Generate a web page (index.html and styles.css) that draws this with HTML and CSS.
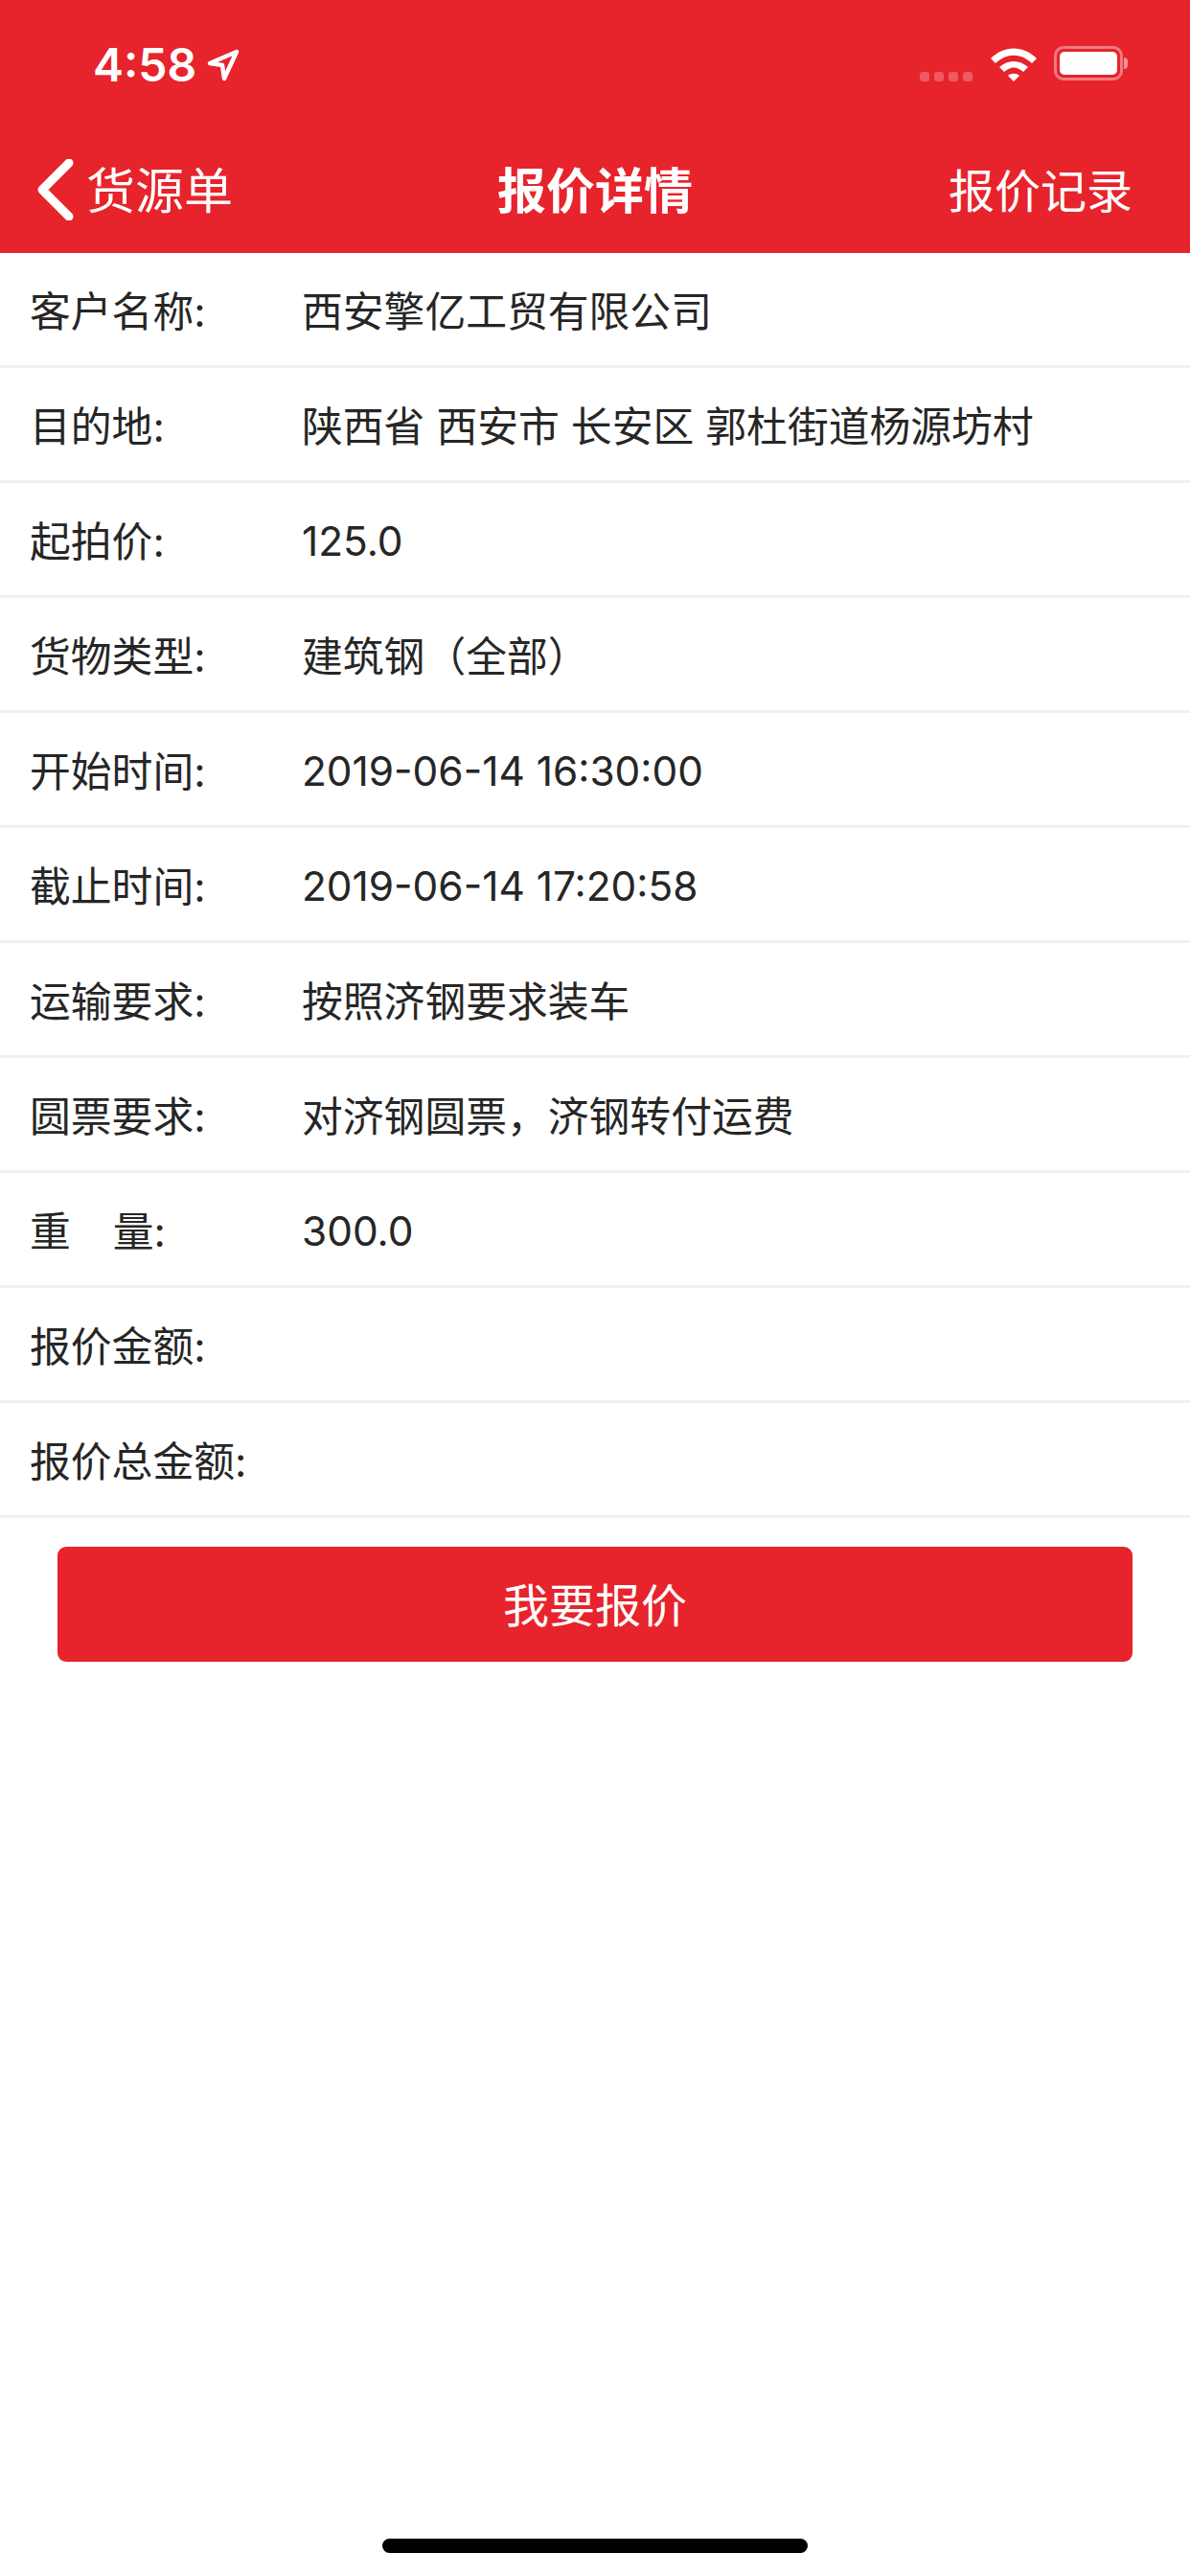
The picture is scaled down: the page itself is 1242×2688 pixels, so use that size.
FILE: index.html
```html
<!DOCTYPE html>
<html lang="zh-CN">
<head>
    <meta charset="UTF-8">
    <meta name="viewport" content="width=device-width, initial-scale=1.0">
    <title>报价详情</title>
    <link rel="stylesheet" href="styles.css">
</head>
<body>

<div class="page">
    <div class="header">
        <div class="status-bar">
            <div class="status-left">
                <span class="time">4:58</span>
                <svg class="location" width="34" height="34" viewBox="0 0 34 34">
                    <path d="M3 15 L31 3 L18 31 L16 17 Z" fill="none" stroke="#fff" stroke-width="4.5" stroke-linejoin="round"/>
                </svg>
            </div>
            <div class="status-right">
                <div class="signal">
                    <span></span><span></span><span></span><span></span>
                </div>
                <svg class="wifi" width="50" height="36" viewBox="0 0 50 36">
                    <path d="M1 12 C15 -2 35 -2 49 12 L44 17 C32 6 18 6 6 17 Z" fill="#fff"/>
                    <path d="M10 21 C19 13 31 13 40 21 L35 26 C28 20 22 20 15 26 Z" fill="#fff"/>
                    <path d="M19 30 C22 27 28 27 31 30 L25 36 Z" fill="#fff"/>
                </svg>
                <div class="battery">
                    <div class="battery-body"><div class="battery-level"></div></div>
                    <div class="battery-cap"></div>
                </div>
            </div>
        </div>
        <div class="nav-bar">
            <div class="nav-back">
                <svg width="40" height="64" viewBox="0 0 40 64">
                    <path d="M34 4 L6 32 L34 60" fill="none" stroke="#fff" stroke-width="9" stroke-linecap="round" stroke-linejoin="round"/>
                </svg>
                <span>货源单</span>
            </div>
            <div class="nav-title">报价详情</div>
            <div class="nav-right">报价记录</div>
        </div>
    </div>

    <div class="detail-list">
        <div class="row"><div class="label">客户名称:</div><div class="value">西安擎亿工贸有限公司</div></div>
        <div class="row"><div class="label">目的地:</div><div class="value">陕西省 西安市 长安区 郭杜街道杨源坊村</div></div>
        <div class="row"><div class="label">起拍价:</div><div class="value value-num">125.0</div></div>
        <div class="row"><div class="label">货物类型:</div><div class="value">建筑钢（全部）</div></div>
        <div class="row"><div class="label">开始时间:</div><div class="value value-num">2019-06-14 16:30:00</div></div>
        <div class="row"><div class="label">截止时间:</div><div class="value value-num">2019-06-14 17:20:58</div></div>
        <div class="row"><div class="label">运输要求:</div><div class="value">按照济钢要求装车</div></div>
        <div class="row"><div class="label">圆票要求:</div><div class="value">对济钢圆票，济钢转付运费</div></div>
        <div class="row"><div class="label label-spread"><span>重</span><span>量:</span></div><div class="value value-num">300.0</div></div>
        <div class="row"><div class="label">报价金额:</div><div class="value"></div></div>
        <div class="row"><div class="label">报价总金额:</div><div class="value"></div></div>
    </div>

    <div class="action">
        <div class="quote-btn">我要报价</div>
    </div>

    <div class="home-bar"></div>
</div>

</body>
</html>
```

FILE: styles.css
```css
body {
    margin: 0;
    background-color: #fff;
    font-family: Inter, "Noto Sans CJK SC", sans-serif;
}
.page {
    width: 1242px;
    height: 2688px;
    display: flex;
    flex-direction: column;
    overflow: hidden;
}
.header {
    height: 264px;
    flex-shrink: 0;
    background: #E7232C;
    color: #fff;
}
.status-bar {
    height: 132px;
    display: flex;
    justify-content: space-between;
    padding: 48px 65px 0 97px;
    box-sizing: border-box;
}
.status-left {
    display: flex;
    align-items: flex-start;
    gap: 11px;
}
.time {
    font-size: 48px;
    font-weight: 600;
    line-height: 40px;
}
.location {
    margin-top: 3px;
}
.status-right {
    display: flex;
    align-items: flex-start;
}
.signal {
    display: flex;
    gap: 5px;
    margin-top: 27px;
    margin-right: 18px;
}
.signal span {
    width: 10px;
    height: 10px;
    border-radius: 3px;
    background: rgba(255, 255, 255, 0.25);
}
.wifi {
    margin-top: 1px;
    margin-right: 17px;
}
.battery {
    display: flex;
    align-items: center;
}
.battery-body {
    width: 72px;
    height: 36px;
    box-sizing: border-box;
    border: 3px solid rgba(255, 255, 255, 0.4);
    border-radius: 10px;
    padding: 3px;
}
.battery-level {
    height: 100%;
    background: #fff;
    border-radius: 5px;
}
.battery-cap {
    width: 4px;
    height: 12px;
    margin-left: 1px;
    background: rgba(255, 255, 255, 0.5);
    border-radius: 0 6px 6px 0;
}
.nav-bar {
    height: 132px;
    box-sizing: border-box;
    display: flex;
    align-items: center;
    justify-content: space-between;
    padding: 0 60px 4px 38px;
}
.nav-back {
    width: 342px;
    display: flex;
    align-items: center;
    gap: 12px;
    font-size: 51px;
}
.nav-back svg {
    margin-top: 4px;
}
.nav-title {
    font-size: 51px;
    font-weight: bold;
}
.nav-right {
    width: 320px;
    text-align: right;
    font-size: 48px;
}
.row {
    height: 120px;
    box-sizing: border-box;
    display: flex;
    align-items: center;
    padding: 0 0 2px 31px;
    border-bottom: 3px solid #F1F1F1;
    font-size: 42.8px;
    color: #262626;
}
.label {
    width: 284px;
    flex-shrink: 0;
}
.label-spread {
    display: flex;
    gap: 44px;
}
.value-num {
    margin-top: 6px;
    font-size: 42.4px;
}
.action {
    padding: 30px 60px 0;
}
.quote-btn {
    height: 120px;
    box-sizing: border-box;
    padding-bottom: 4px;
    display: flex;
    align-items: center;
    justify-content: center;
    background: #E7232C;
    border-radius: 9px;
    color: #fff;
    font-size: 48px;
}
.home-bar {
    width: 444px;
    height: 15px;
    margin: auto auto 24px;
    background: #000;
    border-radius: 8px;
}
```
